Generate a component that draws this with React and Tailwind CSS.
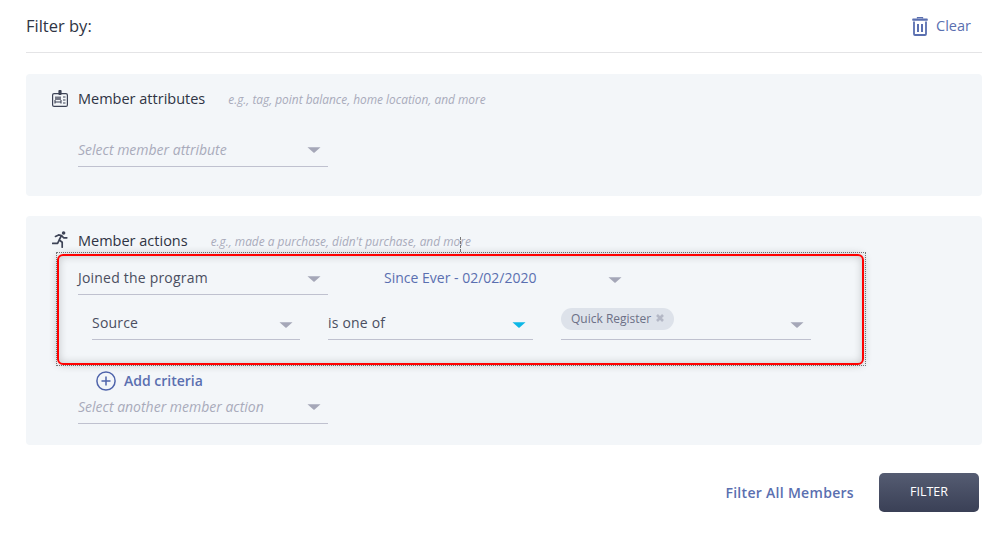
import React from "react";

// small grey triangle used by every select on the page
function Arrow({ color = "#a5a7b8", className = "" }) {
  return (
    <svg width="14" height="6" viewBox="0 0 14 6" className={`shrink-0 ${className}`}>
      <path d="M0.5 0.3 H13.5 L7.6 5.6 Q7 6 6.4 5.6 Z" fill={color} />
    </svg>
  );
}

function Select({ width, placeholder, children, arrowColor, arrowClass = "", className = "" }) {
  return (
    <div className={`flex h-[34px] shrink-0 items-center justify-between border-b border-[#bfc1cf] pr-[7px] ${width} ${className}`}>
      <span className={placeholder ? "text-[14px] italic text-[#a9abbb]" : "text-[14px] font-medium tracking-[0.2px] text-[#4a4e60]"}>
        {children}
      </span>
      <Arrow color={arrowColor} className={arrowClass} />
    </div>
  );
}

function BadgeIcon() {
  return (
    <svg width="16" height="17" viewBox="0 0 16 17" fill="none" className="mb-px shrink-0">
      <rect x="6.4" y="0" width="3.2" height="5" rx="1" fill="#3d4356" />
      <rect x="0.6" y="3.6" width="14.8" height="12.8" rx="1.5" stroke="#3d4356" strokeWidth="1.2" />
      <rect x="3" y="6.5" width="6" height="3.5" fill="#3d4356" opacity="0.7" />
      <path d="M3 13.5 V10 M9 13.5 V10 M3 12 H9" stroke="#3d4356" strokeWidth="1.1" />
      <path d="M11 7 H13.5 M11 10 H13.5 M11 13 H13.5" stroke="#3d4356" strokeWidth="1.1" />
    </svg>
  );
}

function RunnerIcon() {
  return (
    <svg width="16" height="17" viewBox="0 0 16 17" fill="none" className="mb-[3px] shrink-0">
      <circle cx="11.6" cy="2" r="1.8" fill="#3d4356" />
      <path
        d="M3.5 5.4 L6.6 3.9 L9.6 4.6 L11.6 6.8 L14.8 6.8 M9.4 4.6 L7.2 9 L10.2 11.2 L10.2 16.2 M7.2 9 L5.6 12.4 L0.6 12.4"
        stroke="#3d4356"
        strokeWidth="1.7"
        strokeLinecap="round"
        strokeLinejoin="round"
      />
    </svg>
  );
}

function TrashIcon() {
  return (
    <svg width="16" height="19" viewBox="0 0 16 19" fill="none" className="shrink-0">
      <path d="M5.5 1.6 V0.7 H10.5 V1.6" stroke="#5a6fb0" strokeWidth="1.3" />
      <rect x="0.3" y="1.6" width="15.4" height="2.2" rx="0.6" fill="#5a6fb0" />
      <path d="M2 4.5 V17 Q2 18 3 18 H13 Q14 18 14 17 V4.5" stroke="#5a6fb0" strokeWidth="1.8" />
      <path d="M6 7 V15 M10 7 V15" stroke="#5a6fb0" strokeWidth="2" />
    </svg>
  );
}

function PlusCircle() {
  return (
    <svg width="20" height="20" viewBox="0 0 20 20" fill="none" className="shrink-0">
      <circle cx="10" cy="10" r="9.1" stroke="#4f64ab" strokeWidth="1.5" />
      <path d="M10 5.5 V14.5 M5.5 10 H14.5" stroke="#4f64ab" strokeWidth="1.5" />
    </svg>
  );
}

function PanelHeader({ icon, title, hint }) {
  return (
    <div className="flex h-5 items-center">
      <div className="flex w-[26px] shrink-0 items-center">{icon}</div>
      <span className="mb-px text-[14.5px] font-medium whitespace-nowrap text-[#2f3444]">{title}</span>
      <span className="mt-px ml-[23px] text-[11.9px] font-medium italic whitespace-nowrap text-[#a9abbb]">{hint}</span>
    </div>
  );
}

export default function App() {
  return (
    <div className="h-[534px] w-[1007px] overflow-hidden bg-white pr-[25px] pl-[26px] font-['Open_Sans',sans-serif]">
      {/* Top bar */}
      <div className="flex h-[53px] items-center justify-between border-b border-[#e4e4e6]">
        <span className="text-[16.5px] font-medium text-[#2f3444]">Filter by:</span>
        <button className="mr-[11px] flex items-center gap-2 text-[14.5px] font-medium text-[#5a6fb0]">
          <TrashIcon />
          Clear
        </button>
      </div>

      {/* Member attributes */}
      <div className="mt-[21px] h-[122px] rounded bg-[#f3f6f9] pt-[15px] pl-[26px]">
        <PanelHeader
          icon={<BadgeIcon />}
          title="Member attributes"
          hint="e.g., tag, point balance, home location, and more"
        />
        <Select width="w-[250px]" placeholder className="mt-6 ml-[26px]">
          Select member attribute
        </Select>
      </div>

      {/* Member actions */}
      <div className="relative mt-5 h-[229px] rounded bg-[#f3f6f9] pt-[15px] pl-[26px]">
        <PanelHeader
          icon={<RunnerIcon />}
          title="Member actions"
          hint="e.g., made a purchase, didn't purchase, and more"
        />
        <div className="absolute top-[21px] left-[434px] h-[15px] border-l border-dashed border-[#777]" />

        {/* Highlighted criteria */}
        <div className="mt-px ml-1 h-[114px] w-[810px] border border-dotted border-[#777] pt-px pr-px">
          <div className="h-full rounded-md border-2 border-[#f00] pt-[5px] pl-[19px] shadow-[0_0_9px_rgba(0,0,0,0.2),inset_0_0_9px_rgba(0,0,0,0.2)]">
            <div className="flex">
              <Select width="w-[250px]" arrowClass="mt-[3px]">Joined the program</Select>
              <div className="ml-14 flex h-[34px] w-[245px] items-center justify-between pr-[7px] text-[14px] text-[#5a6fb0]">
                <span className="mb-0.5">Since Ever - 02/02/2020</span>
                <Arrow className="mt-[3px]" />
              </div>
            </div>
            <div className="mt-[11px] ml-[14px] flex gap-7">
              <Select width="w-[208px]" arrowClass="mt-[4px]">Source</Select>
              <Select width="w-[205px]" arrowColor="#0cb7e6" arrowClass="mt-[4px]">is one of</Select>
              <div className="flex h-[34px] w-[250px] shrink-0 justify-between border-b border-[#bfc1cf] pt-0.5 pr-[7px]">
                <span className="flex h-[22px] w-[113px] items-center gap-[5px] rounded-full bg-[#dde2ea] pl-2.5 text-[12px] font-medium whitespace-nowrap text-[#6c7086]">
                  Quick Register
                  <svg width="8" height="8" viewBox="0 0 8 8" className="mb-0.5 shrink-0">
                    <path d="M1 1 L7 7 M7 1 L1 7" stroke="#b4b8c6" strokeWidth="2.6" />
                  </svg>
                </span>
                <Arrow className="mt-[14px]" />
              </div>
            </div>
          </div>
        </div>

        <div className="mt-[5px] ml-[44px] flex h-[19px] items-center gap-2 text-[14px] font-semibold text-[#5a6fb0]">
          <PlusCircle />
          Add criteria
        </div>
        <Select width="w-[250px]" placeholder className="ml-[26px]">
          Select another member action
        </Select>
      </div>

      {/* Footer actions */}
      <div className="mt-7 flex items-center justify-end gap-[25px] pr-[3px]">
        <a className="text-[14px] font-semibold tracking-[0.3px] text-[#5a6fb0]">Filter All Members</a>
        <button className="h-[39px] w-[100px] rounded-[5px] bg-gradient-to-b from-[#555c72] to-[#3a4056] text-[12.5px] font-medium text-white">
          FILTER
        </button>
      </div>
    </div>
  );
}
